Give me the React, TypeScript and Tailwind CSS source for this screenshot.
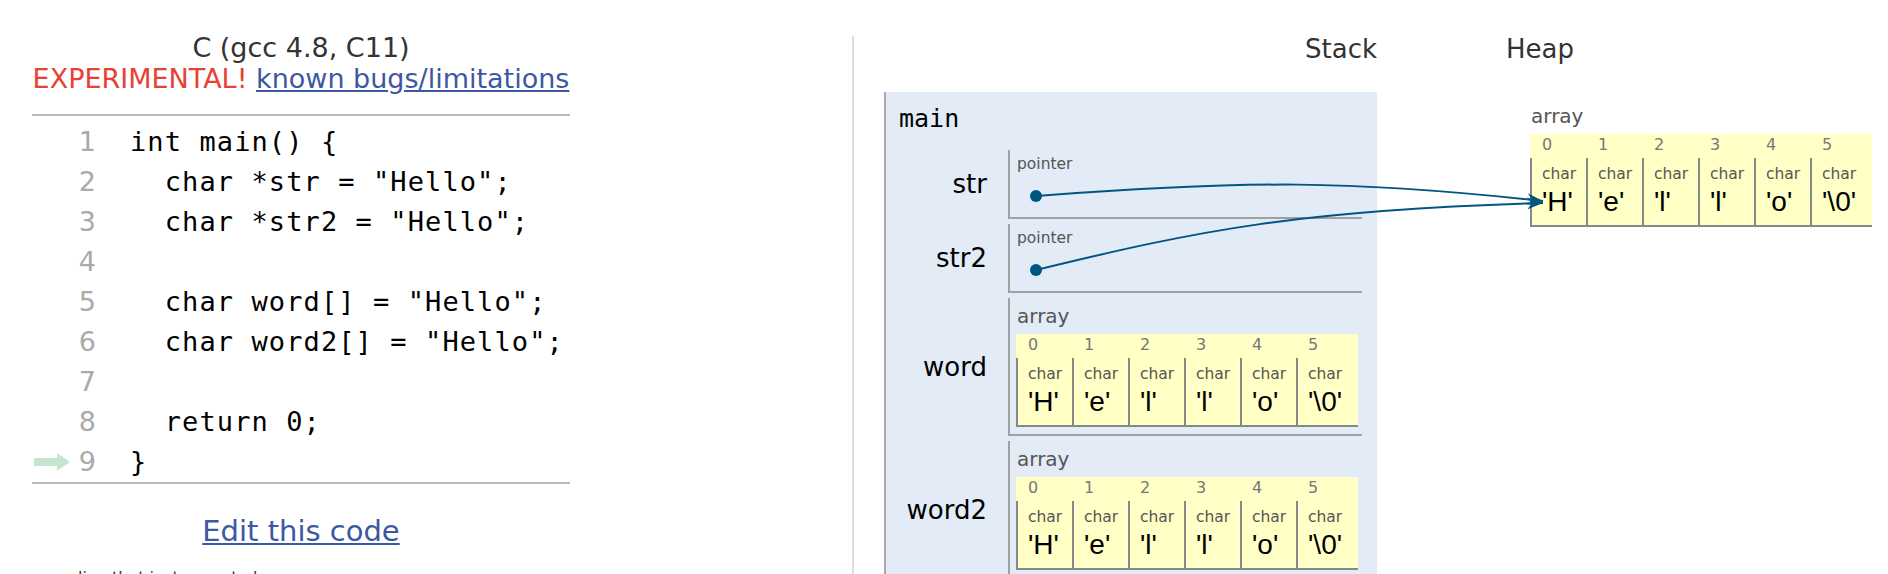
import React from 'react';

const codeLines = [
  'int main() {',
  '  char *str = "Hello";',
  '  char *str2 = "Hello";',
  '',
  '  char word[] = "Hello";',
  '  char word2[] = "Hello";',
  '',
  '  return 0;',
  '}',
];

const cells = ["'H'", "'e'", "'l'", "'l'", "'o'", "'\\0'"];

function CurrentLineArrow() {
  return (
    <svg width="36" height="18" viewBox="0 0 36 18" className="ml-[2px]">
      <polygon points="0,5 23,5 23,0 36,9 23,18 23,13 0,13" fill="#c5e6cd" />
    </svg>
  );
}

function CodePanel() {
  return (
    <div className="w-[852px] shrink-0 pl-[32px] pt-[32px]">
      <div className="w-[538px]">
        <div className="text-center text-[27px] leading-[31px] text-[#333] whitespace-nowrap">C (gcc 4.8, C11)</div>
        <div className="text-center text-[27px] leading-[31px] whitespace-nowrap">
          <span className="text-[#e93f34]">EXPERIMENTAL!</span>{' '}
          <a className="text-[#3d58a2] underline">known bugs/limitations</a>
        </div>

        <div className="mt-[20px] border-t-2 border-[#b8b8b8] pt-[6px]">
          {codeLines.map((line, i) => (
            <div key={i} className="flex h-[40px] items-center">
              <div className="flex w-[40px] items-center">{i === 8 && <CurrentLineArrow />}</div>
              <div className="w-[24px] text-right text-[27px] leading-[40px] text-[#aaa]">{i + 1}</div>
              <div className="ml-[34px] whitespace-pre font-['DejaVu_Sans_Mono',monospace] text-[27px] leading-[40px] tracking-[1.1px]">
                {line}
              </div>
            </div>
          ))}
        </div>
        <div className="border-t-2 border-[#b8b8b8]" />

        <div className="mt-[30px] text-center text-[29px] leading-[34px]">
          <a className="text-[#3d58a2] underline">Edit this code</a>
        </div>
        {/* legend, mostly below the fold */}
        <div className="mt-[20px] pl-[46px] text-[16px] leading-[20px] text-[#333]">line that just executed</div>
      </div>
    </div>
  );
}

function CharArray() {
  return (
    <div className="flex bg-[#ffffc6]">
      {cells.map((c, i) => (
        <div key={i} className={i === 5 ? 'flex w-[62px] flex-col' : 'flex w-[56px] flex-col'}>
          <div className="h-[24px] pl-[12px] text-[16px] leading-[22px] text-[#777]">{i}</div>
          <div className="border-b-2 border-l-2 border-[#888] pb-[8px] pl-[10px] pt-[7px]">
            <div className="text-[15.5px] leading-[18px] text-[#555]">char</div>
            <div className="mt-[4px] whitespace-pre font-['Liberation_Sans',Arial,sans-serif] text-[28px] leading-[30px]">{c}</div>
          </div>
        </div>
      ))}
    </div>
  );
}

function PointerValue() {
  return (
    <div className="h-[69px] border-b-2 border-l-2 border-[#a0a0a0] pl-[7px] pt-[5px]">
      <div className="text-[15.5px] leading-[18px] text-[#555]">pointer</div>
      <div className="ml-[13px] mt-[17px] h-[12px] w-[12px] rounded-full bg-[#005583]" />
    </div>
  );
}

function ArrayValue() {
  return (
    <div className="border-b-2 border-l-2 border-[#a0a0a0] pb-[7px] pl-[6px] pt-[7px]">
      <div className="pl-[1px] text-[20px] leading-[22px] text-[#555]">array</div>
      <div className="mt-[7px] flex">
        <CharArray />
      </div>
    </div>
  );
}

function VarLabel({ name }: { name: string }) {
  return <div className="flex items-center justify-end text-[26px]">{name}</div>;
}

function Visualizer() {
  return (
    <div className="mt-[36px] h-[538px] w-[1036px] shrink-0 border-l-2 border-[#ddd]">
      <div className="flex h-[26px] text-[26px] leading-[26px] text-[#333]">
        <div className="w-[523px] text-right">Stack</div>
        <div className="ml-[129px]">Heap</div>
      </div>
      <div className="flex items-start">
        <div className="w-[523px] shrink-0 pl-[30px] pt-[30px]">
          <div className="w-[493px] border-l-2 border-[#aaa] bg-[#e2ebf6] pb-[20px] pt-[12px]">
            <div className="pl-[13px] font-['DejaVu_Sans_Mono',monospace] text-[25px] leading-[30px]">main</div>
            <div className="mt-[16px] grid grid-cols-[101px_354px] gap-x-[21px] gap-y-[5px]">
              <VarLabel name="str" />
              <PointerValue />
              <VarLabel name="str2" />
              <PointerValue />
              <VarLabel name="word" />
              <ArrayValue />
              <VarLabel name="word2" />
              <ArrayValue />
            </div>
          </div>
        </div>
        <div className="ml-[129px] pl-[24px] pt-[43px]">
          <div className="pl-[1px] text-[20px] leading-[22px] text-[#555]">array</div>
          <div className="mt-[7px] flex">
            <CharArray />
          </div>
        </div>
      </div>
    </div>
  );
}

function Connectors() {
  return (
    <svg className="pointer-events-none absolute left-0 top-0" width="1888" height="574">
      <defs>
        <marker id="head" viewBox="0 0 16 12" markerWidth="16" markerHeight="12" refX="16" refY="6" orient="auto" markerUnits="userSpaceOnUse">
          <path d="M0 0 L16 6 L0 12 L5 6 Z" fill="#005583" />
        </marker>
      </defs>
      <path d="M1036 196 C 1250 180, 1350 180, 1543 201" fill="none" stroke="#005583" strokeWidth="2" markerEnd="url(#head)" />
      <path d="M1036 270 C 1200 230, 1300 210, 1543 203" fill="none" stroke="#005583" strokeWidth="2" markerEnd="url(#head)" />
    </svg>
  );
}

export default function App() {
  return (
    <div className="relative flex h-[574px] w-[1888px] overflow-hidden bg-white font-['DejaVu_Sans',Verdana,sans-serif] text-black">
      <CodePanel />
      <Visualizer />
      <Connectors />
    </div>
  );
}
